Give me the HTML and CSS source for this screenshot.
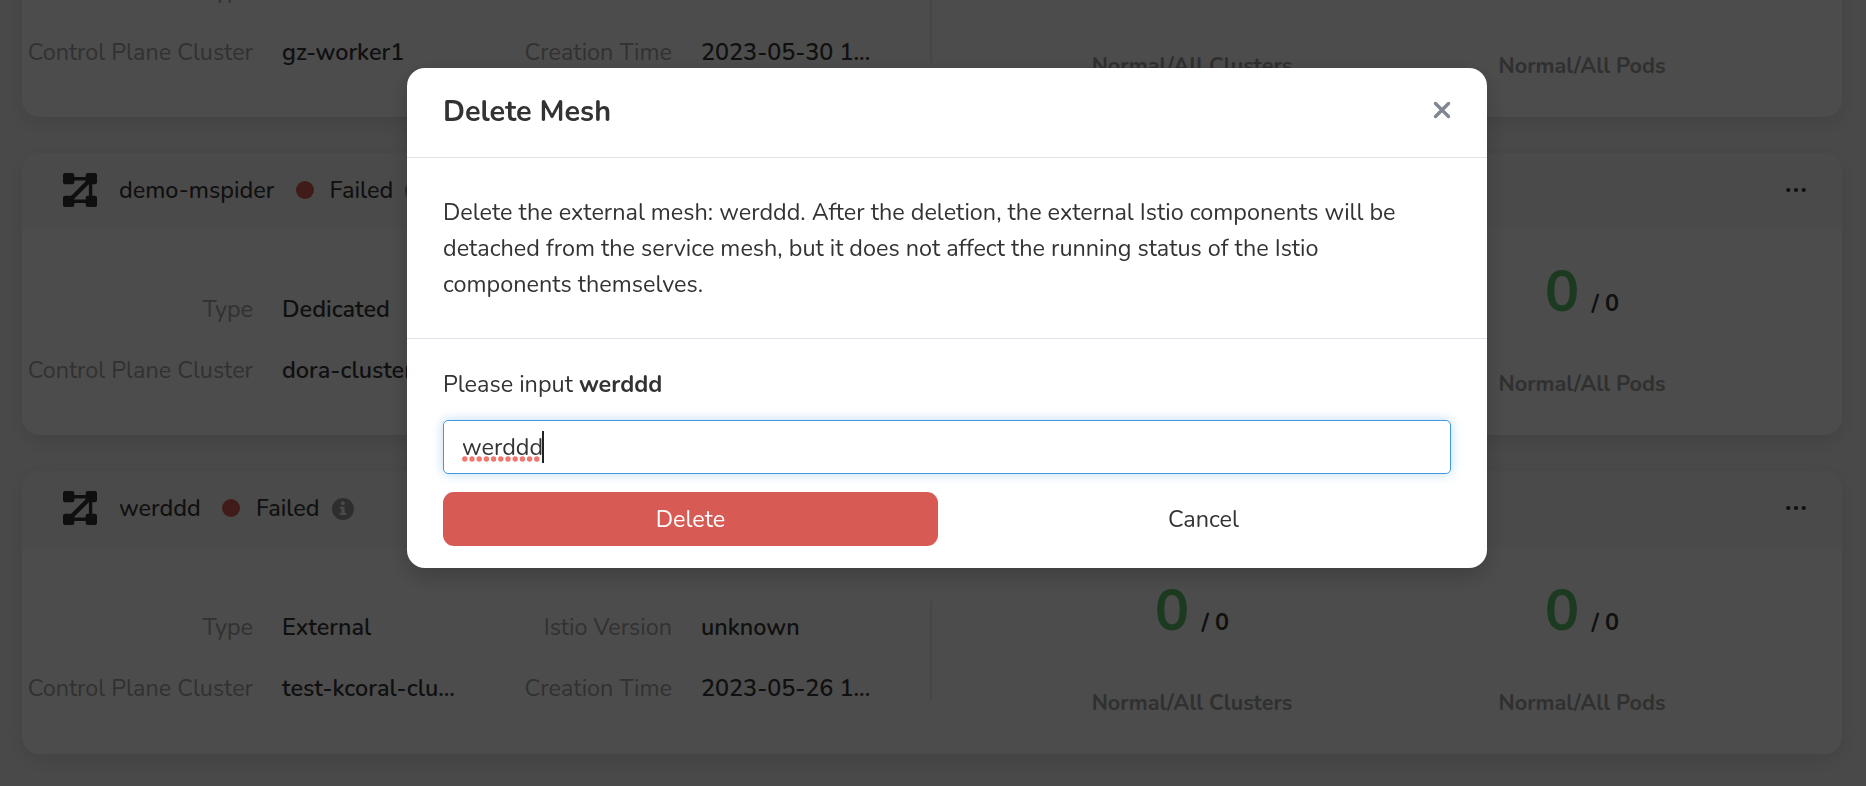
FILE: index.html
```html
<!DOCTYPE html>
<html lang="en">
<head>
<meta charset="utf-8">
<title>Service Mesh</title>
<link rel="stylesheet" href="styles.css">
</head>
<body>
<svg class="sprite" aria-hidden="true">
  <symbol id="mesh" viewBox="0 0 34 34">
    <path d="M7 5.7H27M7 28.3H27M27.6 6V28" fill="none" stroke="currentColor" stroke-width="3.4"/>
    <path d="M6 28L28 6" fill="none" stroke="currentColor" stroke-width="4.4"/>
    <rect x="0" y="0" width="11.3" height="11.3" rx="2"/>
    <rect x="22.7" y="0" width="11.3" height="11.3" rx="2"/>
    <rect x="0" y="22.7" width="11.3" height="11.3" rx="2"/>
    <rect x="22.7" y="22.7" width="11.3" height="11.3" rx="2"/>
  </symbol>
  <symbol id="info" viewBox="0 0 22 22">
    <circle cx="11" cy="11" r="11"/>
    <circle class="info-mark" cx="10.8" cy="5.2" r="1.9"/>
    <path class="info-mark" d="M7.8 8.7H12.6V15H14.4V17H7.6V15H9.4V10.7H7.8Z"/>
  </symbol>
  <symbol id="more" viewBox="0 0 20 6">
    <circle cx="2.3" cy="3" r="2.1"/><circle cx="10" cy="3" r="2.1"/><circle cx="17.7" cy="3" r="2.1"/>
  </symbol>
</svg>

<main class="mesh-list">
  <section class="card">
    <header class="card-head"></header>
    <div class="card-body">
      <dl class="facts">
        <dt>Type</dt><dd></dd>
        <dt>Istio Version</dt><dd></dd>
        <dt>Control Plane Cluster</dt><dd>gz-worker1</dd>
        <dt>Creation Time</dt><dd>2023-05-30 1...</dd>
      </dl>
      <div class="divider"></div>
      <div class="stats">
        <div class="stat"><div class="count"></div><div class="caption">Normal/All Clusters</div></div>
        <div class="stat"><div class="count"></div><div class="caption">Normal/All Pods</div></div>
      </div>
    </div>
  </section>

  <section class="card">
    <header class="card-head">
      <svg class="mesh-icon"><use href="#mesh"/></svg>
      <span class="mesh-name">demo-mspider</span>
      <span class="dot"></span>
      <span class="state">Failed</span>
      <svg class="info-icon"><use href="#info"/></svg>
      <svg class="more-icon"><use href="#more"/></svg>
    </header>
    <div class="card-body">
      <dl class="facts">
        <dt>Type</dt><dd>Dedicated</dd>
        <dt></dt><dd></dd>
        <dt>Control Plane Cluster</dt><dd>dora-cluster</dd>
        <dt></dt><dd></dd>
      </dl>
      <div class="divider"></div>
      <div class="stats">
        <div class="stat"></div>
        <div class="stat"><div class="count"><b>0</b><span>/ 0</span></div><div class="caption">Normal/All Pods</div></div>
      </div>
    </div>
  </section>

  <section class="card">
    <header class="card-head">
      <svg class="mesh-icon"><use href="#mesh"/></svg>
      <span class="mesh-name">werddd</span>
      <span class="dot"></span>
      <span class="state">Failed</span>
      <svg class="info-icon"><use href="#info"/></svg>
      <svg class="more-icon"><use href="#more"/></svg>
    </header>
    <div class="card-body">
      <dl class="facts">
        <dt>Type</dt><dd>External</dd>
        <dt>Istio Version</dt><dd>unknown</dd>
        <dt>Control Plane Cluster</dt><dd>test-kcoral-clu...</dd>
        <dt>Creation Time</dt><dd>2023-05-26 1...</dd>
      </dl>
      <div class="divider"></div>
      <div class="stats">
        <div class="stat"><div class="count"><b>0</b><span>/ 0</span></div><div class="caption">Normal/All Clusters</div></div>
        <div class="stat"><div class="count"><b>0</b><span>/ 0</span></div><div class="caption">Normal/All Pods</div></div>
      </div>
    </div>
  </section>
</main>

<div class="overlay">
  <div class="modal" role="dialog" aria-modal="true">
    <header class="modal-head">
      <h2>Delete Mesh</h2>
      <svg class="close" viewBox="0 0 18 18"><path d="M2.5 2.5L15.5 15.5M15.5 2.5L2.5 15.5"/></svg>
    </header>
    <p class="modal-text">Delete the external mesh: werddd. After the deletion, the external Istio components will be detached from the service mesh, but it does not affect the running status of the Istio components themselves.</p>
    <div class="modal-form">
      <div class="prompt">Please input <b>werddd</b></div>
      <div class="field"><span class="typed">werddd<svg class="squiggle" viewBox="0 0 80 6"><path d="M2.8 3H76"/></svg></span><span class="caret"></span></div>
      <div class="actions">
        <button class="btn btn-delete">Delete</button>
        <button class="btn">Cancel</button>
      </div>
    </div>
  </div>
</div>
</body>
</html>
```
FILE: styles.css
```css
* { box-sizing: border-box; }
html, body { height: 100%; }
body {
  margin: 0;
  overflow: hidden;
  background: #f4f5f7;
  color: #373737;
  font: 400 23.4px/33px Nunito, Lato, "Open Sans", sans-serif;
}
.sprite { position: absolute; width: 0; height: 0; }

/* List, scrolled so that the first card starts above the window */
.mesh-list {
  display: flex;
  flex-direction: column;
  gap: 36px;
  margin-top: -165.6px;
  padding: 0 24px 0 22px;
}
.card {
  flex: none;
  height: 282.4px;
  border-radius: 18px;
  background: #fff;
  box-shadow: 0 6px 20px rgba(40, 48, 44, .12);
}
.card-head {
  display: flex;
  align-items: center;
  height: 75.5px;
  padding: 0 36.5px 0 41px;
  border-radius: 18px 18px 0 0;
  background: #f9f9f9;
  font-weight: 500;
}
.mesh-icon { width: 34px; height: 34px; margin: 0 22px 2px 0; color: #333; fill: #333; }
.dot { width: 18px; height: 18px; margin: 0 16px 2px 21.3px; border-radius: 50%; background: #d85b55; }
.info-icon { width: 22px; height: 22px; margin-left: 12px; fill: #999; }
.info-mark { fill: #f9f9f9; }
.more-icon { width: 20px; height: 6px; margin: 0 0 2px auto; fill: #333; }

.card-body { display: flex; }
.facts {
  display: grid;
  grid-template-columns: 231px 211px 150px 190px;
  column-gap: 29px;
  grid-auto-rows: 33px;
  row-gap: 28.4px;
  width: 908px;
  margin: 0;
  padding-top: 64.3px;
}
.facts dt { text-align: right; color: #a6a6a6; white-space: nowrap; }
.facts dd { margin: 0; font-weight: 600; white-space: nowrap; }
.divider { width: 2px; height: 99px; margin-top: 54.5px; background: #ececec; }
.stats { display: flex; flex: 1; padding: 0 65px; }
.stat { width: 390px; text-align: center; }
.count { display: flex; justify-content: center; align-items: baseline; gap: 12px; height: 82px; margin-top: 23px; line-height: 82px; font-weight: 700; }
.count b { color: #5ec26a; font-size: 57.6px; font-weight: 670; }
.caption { margin-top: 34.9px; color: #a0a0a0; font-size: 21.6px; font-weight: 700; }

.overlay {
  position: fixed;
  inset: 0;
  display: flex;
  justify-content: center;
  align-items: flex-start;
  padding: 68px 0 0 28px;
  background: rgba(0, 0, 0, .7);
}
.modal {
  width: 1080px;
  height: 500px;
  border-radius: 18px;
  background: #fff;
  color: #333;
  box-shadow: 0 8px 24px rgba(0, 0, 0, .2);
}
.modal-head {
  display: flex;
  align-items: center;
  justify-content: space-between;
  height: 90px;
  padding: 0 36px 2px;
  border-bottom: 1px solid #e3e3e3;
}
.modal-head h2 { margin: 0; font-size: 28.8px; font-weight: 700; line-height: 38px; }
.close { width: 18px; height: 18px; margin-bottom: 3px; fill: none; stroke: #818790; stroke-width: 3.4; stroke-linecap: round; }
.modal-text { height: 181px; margin: 0; padding: 36px 36px 0; border-bottom: 1px solid #e2e2ec; line-height: 36px; }
.modal-form { padding: 27px 36px 0; }
.prompt { height: 36px; line-height: 36px; }
.field {
  display: flex;
  align-items: center;
  height: 54px;
  margin-top: 18px;
  padding: 0 18px;
  border: 1px solid #4297e0;
  border-radius: 5px;
  box-shadow: 0 0 12px rgba(66, 151, 224, .35);
}
.typed { position: relative; }
.squiggle { position: absolute; left: 0; bottom: 2px; width: 80px; height: 6px; overflow: visible; fill: none; stroke: #f0776e; stroke-width: 5.4; stroke-linecap: round; stroke-dasharray: 0 7.2; }
.caret { width: 2px; height: 32px; margin-left: -1px; background: #222; }
.actions { display: flex; gap: 18px; margin-top: 18px; }
.btn { width: 495px; height: 54px; padding: 0; border: 0; border-radius: 11px; background: none; color: #333; font: inherit; }
.btn-delete { background: #d75a54; color: #fff; }
```
